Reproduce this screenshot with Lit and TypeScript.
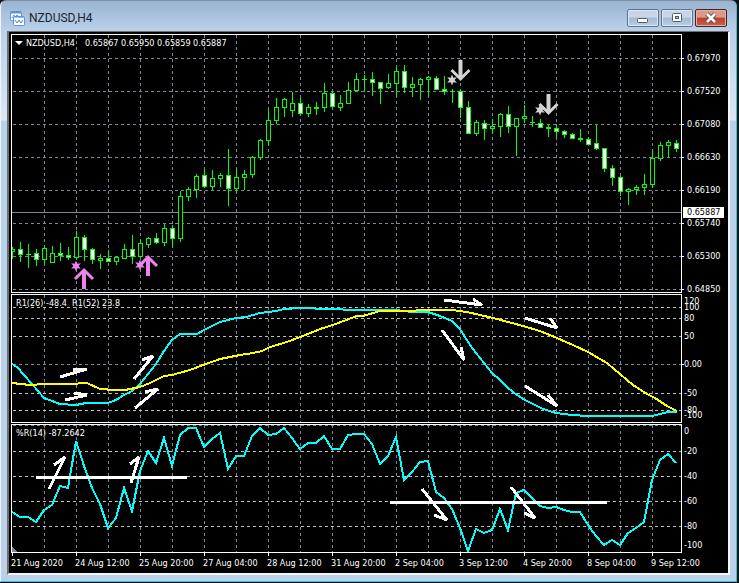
import { LitElement, html, svg, css } from "lit";
import { customElement, property } from "lit/decorators.js";

type Pt = [number, number];

// Candles: wick top, wick bottom, body top, body bottom, kind (1 = bearish, 0 = bullish)
const CANDLES: [number, number, number, number, number][] = [
  [247, 259, 249, 252, 0], [242, 262, 249, 255, 1], [244, 268, 254, 255, 0], [249, 266, 253, 260, 1],
  [246, 264, 248, 260, 0], [246, 263, 253, 263, 0], [243, 261, 253, 256, 1], [247, 260, 255, 258, 1],
  [231, 259, 237, 258, 0], [235, 261, 237, 250, 1], [248, 264, 249, 260, 1], [254, 269, 258, 261, 0],
  [250, 262, 258, 262, 1], [257, 265, 257, 262, 0], [244, 259, 249, 259, 0], [235, 264, 249, 257, 1],
  [239, 258, 243, 257, 0], [237, 248, 238, 245, 0], [233, 244, 238, 243, 1], [224, 246, 228, 243, 0],
  [225, 248, 228, 239, 1], [191, 242, 196, 239, 0], [187, 201, 189, 197, 0], [174, 198, 176, 190, 0],
  [169, 188, 175, 187, 1], [170, 190, 178, 187, 0], [173, 187, 175, 179, 0], [149, 206, 175, 189, 1],
  [169, 191, 177, 189, 0], [170, 190, 174, 178, 0], [156, 178, 157, 175, 0], [139, 160, 140, 158, 0],
  [110, 146, 120, 141, 0], [98, 124, 107, 121, 0], [98, 117, 99, 108, 0], [92, 117, 103, 111, 0],
  [98, 115, 103, 114, 1], [104, 117, 107, 114, 0], [102, 115, 107, 109, 0], [83, 112, 93, 108, 0],
  [92, 108, 93, 107, 1], [95, 111, 103, 108, 0], [82, 104, 90, 104, 0], [73, 92, 79, 91, 0],
  [75, 91, 79, 80, 0], [72, 96, 79, 83, 1], [82, 104, 82, 89, 1], [74, 89, 83, 88, 0],
  [67, 97, 71, 84, 0], [65, 93, 71, 88, 1], [77, 97, 84, 88, 0], [78, 100, 79, 85, 0],
  [76, 96, 77, 80, 0], [76, 90, 78, 90, 1], [76, 95, 89, 92, 1], [89, 103, 91, 92, 0],
  [90, 118, 91, 108, 1], [101, 134, 107, 134, 1], [120, 136, 122, 134, 0], [120, 140, 123, 129, 1],
  [119, 134, 126, 129, 0], [113, 137, 114, 127, 0], [106, 133, 114, 127, 1], [118, 156, 118, 127, 0],
  [105, 123, 116, 119, 0], [116, 127, 122, 123, 0], [119, 128, 123, 128, 1], [124, 137, 127, 129, 0],
  [124, 137, 128, 132, 1], [130, 138, 131, 135, 1], [133, 139, 134, 139, 1], [129, 142, 138, 140, 0],
  [137, 145, 139, 145, 1], [125, 150, 143, 149, 1], [148, 172, 148, 169, 1], [165, 186, 168, 178, 1],
  [176, 196, 177, 192, 1], [188, 205, 189, 192, 0], [185, 195, 187, 190, 0], [174, 195, 184, 188, 0],
  [150, 188, 158, 185, 0], [142, 161, 145, 159, 0], [140, 157, 142, 146, 0], [140, 152, 143, 149, 1],
];

const R26: Pt[] = [
  [12, 364], [17, 367], [24, 375], [32, 384], [44, 398], [52, 401], [60, 404], [76, 405], [86, 403],
  [108, 403], [116, 400], [124, 395], [132, 391], [140, 384], [148, 374], [156, 364], [164, 351],
  [172, 340], [180, 334], [197, 334], [204, 330], [220, 322], [236, 318], [246, 317], [260, 313],
  [276, 311], [284, 309], [300, 308], [330, 309], [356, 310], [396, 310], [412, 312], [428, 312],
  [440, 316], [452, 321], [460, 329], [468, 342], [476, 353], [484, 363], [492, 373], [500, 380],
  [508, 388], [517, 395], [525, 400], [543, 409], [556, 413], [572, 415], [588, 416], [652, 416],
  [660, 414], [668, 412], [677, 412],
];

const R52: Pt[] = [
  [12, 383], [30, 385], [45, 384], [70, 384], [87, 383], [100, 389], [115, 390], [125, 390],
  [140, 387], [150, 383], [164, 376], [172, 375], [190, 370], [203, 365], [220, 359], [230, 357],
  [240, 355], [253, 353], [262, 351], [270, 347], [287, 342], [303, 336], [320, 329], [333, 325],
  [357, 316], [363, 316], [380, 311], [412, 311], [420, 310], [452, 310], [467, 312], [480, 315],
  [493, 318], [523, 326], [540, 331], [557, 338], [573, 345], [588, 352], [607, 363], [620, 374],
  [633, 385], [647, 394], [655, 398], [667, 406], [677, 411],
];

// %R values, one for each candle
const WPR = [
  512, 517, 517, 522, 510, 505, 486, 488, 441, 466, 488, 504, 528, 518, 488, 511, 471, 451, 463, 438,
  466, 435, 428, 428, 447, 439, 433, 469, 456, 456, 436, 428, 435, 434, 428, 438, 449, 443, 443, 436,
  449, 449, 435, 434, 434, 444, 464, 456, 437, 480, 472, 462, 461, 492, 498, 509, 528, 551, 529, 533,
  530, 509, 530, 493, 490, 498, 506, 508, 507, 510, 512, 512, 525, 536, 545, 540, 545, 533, 528, 522,
  480, 460, 454, 463,
];

// Hand-drawn arrows: tail, tip, barb
const ARROWS_R: [Pt, Pt, Pt][] = [
  [[60, 377], [87, 369], [73, 369]],
  [[65, 400], [87, 395], [74, 393]],
  [[134, 379], [153, 356], [142, 360]],
  [[135, 408], [158, 389], [145, 392]],
  [[444, 300], [482, 305], [473, 299]],
  [[525, 318], [557, 328], [550, 318]],
  [[442, 330], [464, 360], [461, 347]],
  [[525, 386], [557, 406], [548, 395]],
];
const ARROWS_W: [Pt, Pt, Pt][] = [
  [[49, 489], [65, 457], [54, 465]],
  [[131, 483], [139, 457], [130, 464]],
  [[422, 489], [447, 520], [434, 515]],
  [[511, 487], [535, 518], [524, 513]],
];

interface Label { text: string; y: number; tick?: boolean; badge?: boolean; }
interface Panel {
  top: number; height: number; legend: string[]; menu?: boolean; axis: string;
  grid: number[]; levels: number[]; labels: Label[]; content: () => unknown;
}

const LEFT = 12;
const WIDTH = 669;
const path = (pts: Pt[]) => pts.map((p) => p.join(",")).join(" ");

const candle = ([wt, wb, bt, bb, bear]: number[], i: number) => {
  const x = LEFT + i * 8;
  return svg`
    <rect class="lime" x=${x} y=${wt} width="1" height=${wb - wt}></rect>
    <rect class="lime" x=${x - 2} y=${bt} width="5" height=${bb - bt}></rect>
    ${bb - bt > 2
      ? svg`<rect class=${bear ? "bear" : "bull"} x=${x - 1} y=${bt + 1} width="3" height=${bb - bt - 2}></rect>`
      : ""}`;
};

const star = (x: number, y: number, cls: string) => {
  const pts: Pt[] = [];
  for (let i = 0; i < 12; i++) {
    const r = i % 2 ? 2.6 : 5.6;
    const a = (Math.PI / 6) * i - Math.PI / 2;
    pts.push([x + r * Math.cos(a), y + r * Math.sin(a)]);
  }
  return svg`<polygon class=${cls} points=${path(pts)}></polygon>`;
};

const signal = (x: number, tip: number, dir: number, cls: string) => svg`
  <path class="signal ${cls}" d="M${x} ${tip + dir * 21}V${tip + dir * 3}"></path>
  <path class="head ${cls}" d="M${x - 9} ${tip + dir * 11}L${x} ${tip + dir * 2}L${x + 9} ${tip + dir * 11}"></path>`;

const arrow = ([a, b, c]: [Pt, Pt, Pt]) => svg`<polyline class="drawn" points=${path([a, b, c])}></polyline>`;

const PANELS: Panel[] = [
  {
    top: 35, height: 257, menu: true, axis: "wide",
    legend: ["NZDUSD,H4", "0.65867 0.65950 0.65859 0.65887"],
    grid: [58, 91, 124, 157, 190, 223, 256, 289], levels: [],
    labels: [
      ...["0.67970", "0.67520", "0.67080", "0.66630", "0.66190", "0.65740", "0.65300", "0.64850"].map(
        (text, i) => ({ text, y: 58 + i * 33, tick: true })),
      { text: "0.65887", y: 212, badge: true },
    ],
    content: () => svg`
      <rect class="price" x="12" y="212" width="669" height="1"></rect>
      ${CANDLES.map(candle)}
      ${star(76, 266, "buy-fill")}${signal(84, 268, 1, "buy")}
      ${star(140, 265, "buy-fill")}${signal(148, 255, 1, "buy")}
      ${star(452, 80, "sell-fill")}${signal(460.5, 81, -1, "sell")}
      ${star(540, 110, "sell-fill")}${signal(548.5, 115, -1, "sell")}`,
  },
  {
    top: 295, height: 127, axis: "narrow",
    legend: ["R1(26) -48.4\u00a0 R1(52) 23.8"],
    grid: [364], levels: [307, 318, 336, 393, 410],
    labels: [
      { text: "120", y: 301 }, { text: "100", y: 307 }, { text: "80", y: 318 }, { text: "50", y: 336 },
      { text: "0.00", y: 364, tick: true }, { text: "-50", y: 393 }, { text: "-80", y: 410 }, { text: "-100", y: 415 },
    ],
    content: () => svg`
      <polyline class="cyan" points=${path(R26)}></polyline>
      <polyline class="yellow" points=${path(R52)}></polyline>
      ${ARROWS_R.map(arrow)}`,
  },
  {
    top: 425, height: 127, axis: "narrow",
    legend: ["%R(14) -87.2642"],
    grid: [425], levels: [451, 476, 501, 526],
    labels: [
      { text: "0", y: 431 }, { text: "-20", y: 451 }, { text: "-40", y: 476 },
      { text: "-60", y: 501 }, { text: "-80", y: 526 }, { text: "-100", y: 545 },
    ],
    content: () => svg`
      <polyline class="cyan" points=${path(WPR.map((y, i): Pt => [LEFT + i * 8, y]))}></polyline>
      <rect class="mark" x="36" y="476" width="151" height="3"></rect>
      <rect class="mark" x="390" y="501" width="217" height="3"></rect>
      ${ARROWS_W.map(arrow)}
      <path class="corner" d="M12 547L17 552H12Z"></path>`,
  },
];

const TIMES = [
  "21 Aug 2020", "24 Aug 12:00", "25 Aug 20:00", "27 Aug 04:00", "28 Aug 12:00", "31 Aug 20:00",
  "2 Sep 04:00", "3 Sep 12:00", "4 Sep 20:00", "8 Sep 04:00", "9 Sep 12:00",
];

@customElement("chart-panel")
class ChartPanel extends LitElement {
  @property({ attribute: false }) panel!: Panel;

  static styles = css`
    :host { display: grid; grid-template-columns: minmax(0, 1fr) 46px; min-height: 0; color: #fff; }
    .plot { display: grid; grid-template: minmax(0, 1fr) / minmax(0, 1fr); border: 1px solid #fff; min-height: 0; }
    .plot > * { grid-area: 1 / 1; }
    svg { width: 100%; height: 100%; display: block; shape-rendering: crispEdges; }
    .legend { margin: 0; padding: 2px 4px; line-height: 12px; white-space: nowrap; z-index: 1; display: flex; gap: 10px; align-self: start; }
    .menu { width: 0; height: 0; border: 4px solid transparent; border-top-color: #fff; border-bottom: 0; margin: 4px -7px 0 -1px; padding: 0; background: none; }
    .grid { stroke: #778899; stroke-width: 1; stroke-dasharray: 3 3; }
    .level { stroke: #c0c0c0; stroke-width: 1; stroke-dasharray: 3 3; }
    .price { fill: #778899; }
    .lime { fill: #0f0; }
    .bear, .mark { fill: #fff; }
    .bull { fill: #000; }
    .cyan, .yellow { fill: none; stroke: #0ff; stroke-width: 2; }
    .yellow { stroke: #ff0; }
    .drawn { fill: none; stroke: #fff; stroke-width: 3; stroke-linejoin: bevel; }
    .signal, .head { fill: none; stroke-width: 4; shape-rendering: auto; }
    .head { stroke-width: 3; }
    .buy { stroke: #ee82ee; }
    .sell { stroke: #d3d3d3; }
    .buy-fill { fill: #ee82ee; shape-rendering: auto; }
    .sell-fill { fill: #d3d3d3; shape-rendering: auto; }
    .corner { fill: #778899; }
    .axis { position: relative; margin: 1px 0; }
    .label { position: absolute; left: 2px; line-height: 12px; margin-top: -6px; white-space: nowrap; }
    .wide .label { left: 5px; }
    .tick { position: absolute; left: 0; width: 2px; height: 1px; background: #fff; }
    .wide .badge { left: 1px; padding: 0 4px; line-height: 11px; margin-top: -5px; background: #fff; color: #000; }
  `;

  render() {
    const p = this.panel;
    const pct = (y: number) => `top:${((y - p.top) / p.height) * 100}%`;
    const xs = Array.from({ length: 20 }, (_, i) => 44.5 + i * 32);
    return html`
      <div class="plot">
        <svg viewBox="${LEFT} ${p.top} ${WIDTH} ${p.height}" preserveAspectRatio="none" role="img" aria-label=${p.legend.join(" ")}>
          ${xs.map((x) => svg`<line class="grid" x1=${x} x2=${x} y1=${p.top} y2=${p.top + p.height}></line>`)}
          ${p.grid.map((y) => svg`<line class="grid" x1="13" x2="681" y1=${y + 0.5} y2=${y + 0.5}></line>`)}
          ${p.levels.map((y) => svg`<line class="level" x1="13" x2="681" y1=${y + 0.5} y2=${y + 0.5}></line>`)}
          ${p.content()}
        </svg>
        <p class="legend">
          ${p.menu ? html`<button class="menu" aria-label="Chart menu"></button>` : ""}
          ${p.legend.map((t) => html`<span>${t}</span>`)}
        </p>
      </div>
      <div class="axis ${p.axis}">
        ${p.labels.map((l) => html`
          ${l.tick ? html`<span class="tick" style=${pct(l.y)}></span>` : ""}
          <span class="label ${l.badge ? "badge" : ""}" style=${pct(l.y)}>${l.text}</span>`)}
      </div>`;
  }
}

@customElement("app-root")
class AppRoot extends LitElement {
  static styles = css`
    :host { display: block; height: 100vh; background: #111; box-sizing: border-box; padding: 0 2px 1px 0; }
    .window {
      height: 100%; box-sizing: border-box; display: grid; grid-template-rows: 30px minmax(0, 1fr);
      border: 1px solid #eef5fc; border-right-color: #35c0e0; border-bottom-color: #35c0e0;
      border-top-color: #7c8fa5; border-radius: 6px 6px 0 0; padding: 0 6px 6px; background: #b9d1ea;
      background-image: linear-gradient(#9ab4d1, #b9d1ea 30px, #dbe8f5 119px, #b9d1ea 120px);
    }
    .title { display: flex; align-items: center; gap: 4px; padding: 4px 3px 0; font: 12px/16px Roboto, "Noto Sans", sans-serif; color: #1c2430; }
    .title h1 { font: inherit; margin: 0; flex: 1; }
    .controls { display: flex; gap: 2px; }
    .control {
      width: 32px; height: 18px; padding: 0; display: grid; place-items: center; border: 1px solid #5d7390; border-radius: 2px;
      background: linear-gradient(#c6d6e8 45%, #a3bad4 50%, #b9cfe6); box-shadow: inset 0 0 0 1px #dce8f5;
    }
    .close { border-color: #521c1c; background: linear-gradient(#d99a8c 45%, #b8402c 50%, #c8604a); box-shadow: inset 0 0 0 1px #e5b0a4; }
    .control svg, .icon { display: block; }
    .client {
      display: grid; grid-template-rows: minmax(0, 259fr) minmax(0, 129fr) minmax(0, 129fr) 19px; row-gap: 1px; min-height: 0;
      background: #000; border: solid; border-width: 1px 2px 2px; border-color: #6e6e6e #f4f4f4 #f4f4f4 #6e6e6e; padding: 2px 0 0 2px;
      font: 9px/12px "DejaVu Sans Condensed", "Noto Sans", sans-serif; color: #fff;
    }
    .times { display: flex; margin: -1px 0 0; padding: 0; list-style: none; }
    .times li { flex: 64 0 0; white-space: nowrap; line-height: 14px; min-width: 0; }
    .times li::before { content: ""; display: block; width: 1px; height: 3px; margin-left: 1px; background: #fff; }
    .times li:last-child { flex-grow: 77; }
  `;

  render() {
    return html`
      <main class="window">
        <header class="title">
          <svg class="icon" width="15" height="15" viewBox="0 0 15 15">
            <rect x=".5" y=".5" width="11" height="9" rx="1" fill="#fff" stroke="#5b8fe8"></rect>
            <path d="M1 1.500h10" stroke="#5b8fe8" stroke-width="2"></path>
            <path d="M2 7l2-3 1 2 2-2 2 2" fill="none" stroke="#5b8fe8"></path>
            <rect x="3.500" y="5.500" width="11" height="9" rx="1" fill="#fff" stroke="#5b8fe8"></rect>
            <path d="M4 6.500h10" stroke="#9dbdf5" stroke-width="1"></path>
            <path d="M5 9l2 3 2-3 2 3 2-3" fill="none" stroke="#4a7fdc"></path>
          </svg>
          <h1>NZDUSD,H4</h1>
          <div class="controls">
            <button class="control" aria-label="Minimize">
              <svg width="12" height="12" viewBox="0 0 12 12"><rect x=".5" y="6.500" width="10" height="4" rx="1" fill="#fff" stroke="#535c69"></rect></svg>
            </button>
            <button class="control" aria-label="Maximize">
              <svg width="12" height="12" viewBox="0 0 12 12">
                <rect x="1.500" y="1.500" width="9" height="8" rx="1" fill="#fff" stroke="#535c69"></rect>
                <rect x="4.500" y="4.500" width="3" height="2" fill="#a9bfd8" stroke="#535c69"></rect>
              </svg>
            </button>
            <button class="control close" aria-label="Close">
              <svg width="12" height="12" viewBox="0 0 12 12">
                <path d="M2 2l8 8M10 2l-8 8" stroke="#5a4044" stroke-width="4.500"></path>
                <path d="M2 2l8 8M10 2l-8 8" stroke="#fff" stroke-width="2.600"></path>
              </svg>
            </button>
          </div>
        </header>
        <section class="client">
          ${PANELS.map((p) => html`<chart-panel .panel=${p}></chart-panel>`)}
          <ul class="times">${TIMES.map((t) => html`<li>${t}</li>`)}</ul>
        </section>
      </main>`;
  }
}
